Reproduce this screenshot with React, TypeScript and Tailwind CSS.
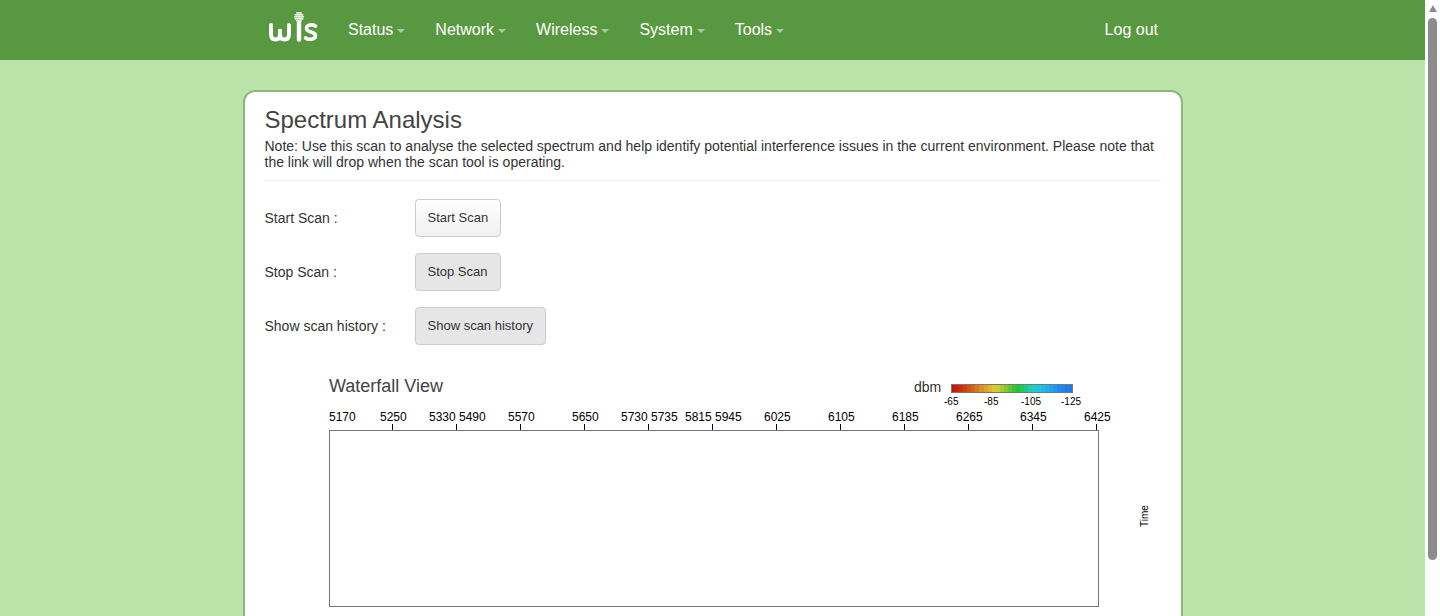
const menu = ["Status", "Network", "Wireless", "System", "Tools"];

const legend = [
  "#c8140a", "#cc1e0a", "#cf2d0c", "#cf3f10", "#d05214", "#d46418", "#d87a1c", "#dc9020", "#dea424", "#dcb828",
  "#d8cc2c", "#c8d02c", "#a8cc2c", "#84c82c", "#5cc82c", "#34c82c", "#20c838", "#1cc860", "#1ccc88", "#1cd0b0",
  "#1cd0cc", "#1cc8e0", "#1cbce8", "#1cb0ec", "#1ca4f0", "#1c98f0", "#1c8cf4", "#1c84f4", "#1c7cf4", "#1c78f4",
];

const ticks = [392, 456, 520, 584, 648, 712, 776, 840, 904, 968, 1032, 1096];

const freqs: [string, number][] = [
  ["5170", 329], ["5250", 380], ["5330", 429], ["5490", 459], ["5570", 508], ["5650", 572], ["5730", 621], ["5735", 651],
  ["5815", 685], ["5945", 715], ["6025", 764], ["6105", 828], ["6185", 892], ["6265", 956], ["6345", 1020], ["6425", 1084],
];

function Logo() {
  return (
    <svg width="52" height="36" viewBox="0 0 52 36" className="shrink-0">
      <g fill="none" stroke="#fff" strokeLinecap="round">
        <path d="M3 13 V22 C3 26 5 27.500 7.500 27.500 C10 27.500 12 26 12 22 V17 V22 C12 26 14 27.500 16.500 27.500 C19 27.500 21 26 21 22 V13" strokeWidth="4" />
        <path d="M31 11 V27.500" strokeWidth="4.400" />
        <path d="M47.500 14 C45 12.500 38.500 12 38.500 16.500 C38.500 21 47.500 19 47.500 23.500 C47.500 28 40 28 37.500 26" strokeWidth="3.600" />
      </g>
      <g fill="#fff" opacity="0.85">
        <rect x="28" y="0" width="6" height="1.700" rx="0.800" />
        <rect x="26.500" y="2" width="9" height="1.700" rx="0.800" />
        <rect x="26" y="4" width="10" height="1.700" rx="0.800" />
        <rect x="26.500" y="6" width="9" height="1.700" rx="0.800" />
        <rect x="28" y="8" width="6" height="1.700" rx="0.800" />
      </g>
    </svg>
  );
}

function Row({ label, button, active }: { label: string; button: string; active?: boolean }) {
  return (
    <div className="flex h-[38px] items-center">
      <div className="w-[150px] shrink-0 text-sm text-[#333]">{label}</div>
      <button
        className={
          active
            ? "h-[38px] rounded border border-[#ccc] bg-[#e6e6e6] px-3 text-[13px] text-[#333]"
            : "h-[38px] rounded border border-[#ccc] bg-gradient-to-b from-white to-[#f0f0f0] px-3 text-[13px] text-[#333]"
        }
      >
        {button}
      </button>
    </div>
  );
}

function Waterfall() {
  return (
    <svg width="895" height="246" viewBox="265 370 895 246" className="mt-[25px] block">
      <text x="329" y="392" fontSize="18" fill="#444">Waterfall View</text>
      <text x="914" y="392" fontSize="14" fill="#333">dbm</text>
      {legend.map((c, i) => (
        <rect key={i} x={951 + i * 4.07} y="384" width="4.100" height="9" fill={c} shapeRendering="crispEdges" />
      ))}
      <rect x="951.500" y="384.500" width="121" height="8" fill="none" stroke="#777" />
      {[["-65", 944], ["-85", 984], ["-105", 1021], ["-125", 1061]].map(([t, x]) => (
        <text key={t} x={x} y="405" fontSize="10" fill="#000">{t}</text>
      ))}
      {freqs.map(([t, x]) => (
        <text key={t} x={x} y="421" fontSize="12" fill="#000">{t}</text>
      ))}
      {ticks.map((x) => (
        <line key={x} x1={x + 0.5} x2={x + 0.5} y1="424" y2="430" stroke="#000" />
      ))}
      <rect x="329.500" y="430.500" width="769" height="176" fill="none" stroke="#777" />
      <text transform="translate(1148 527) rotate(-90)" fontSize="10" fill="#000">Time</text>
    </svg>
  );
}

export default function App() {
  return (
    <div className="flex h-[616px] w-full overflow-hidden font-['Liberation_Sans',Arial,sans-serif]">
      <div className="flex min-w-0 flex-1 flex-col bg-[#bce4aa]">
        {/* Top nav */}
        <nav className="flex h-[60px] shrink-0 items-center bg-[#589840] pl-[268px] pr-[267px] text-white">
          <Logo />
          <ul className="ml-[28px] flex flex-1 items-center gap-[30px]">
            {menu.map((item) => (
              <li key={item} className="flex items-center text-base">
                {item}
                <span className="ml-1 mt-0.5 border-x-4 border-t-4 border-x-transparent border-t-white/50" />
              </li>
            ))}
          </ul>
          <span className="text-base">Log out</span>
        </nav>

        {/* Content card */}
        <div className="mx-auto mt-[30px] w-[940px] flex-1 rounded-t-xl border-2 border-b-0 border-[#8aba78] bg-white px-5 pt-[15px]">
          <h1 className="text-2xl leading-[26px] text-[#444]">Spectrum Analysis</h1>
          <p className="mt-[5px] text-sm leading-4 text-[#333]">
            Note: Use this scan to analyse the selected spectrum and help identify potential interference issues in the
            current environment. Please note that the link will drop when the scan tool is operating.
          </p>
          <hr className="mt-[10px] border-[#eee]" />
          <div className="mt-[18px] flex flex-col gap-4">
            <Row label="Start Scan :" button="Start Scan" />
            <Row label="Stop Scan :" button="Stop Scan" active />
            <Row label="Show scan history :" button="Show scan history" active />
          </div>
          <Waterfall />
        </div>
      </div>

      {/* Scrollbar */}
      <div className="flex w-[15px] shrink-0 flex-col items-center bg-[#fdfdfd] pt-[5px]">
        <div className="border-x-[4.5px] border-b-[7px] border-x-transparent border-b-[#8c8c8c]" />
        <div className="mt-[6px] h-[542px] w-[9px] rounded-full bg-[#8c8c8c]" />
      </div>
    </div>
  );
}
